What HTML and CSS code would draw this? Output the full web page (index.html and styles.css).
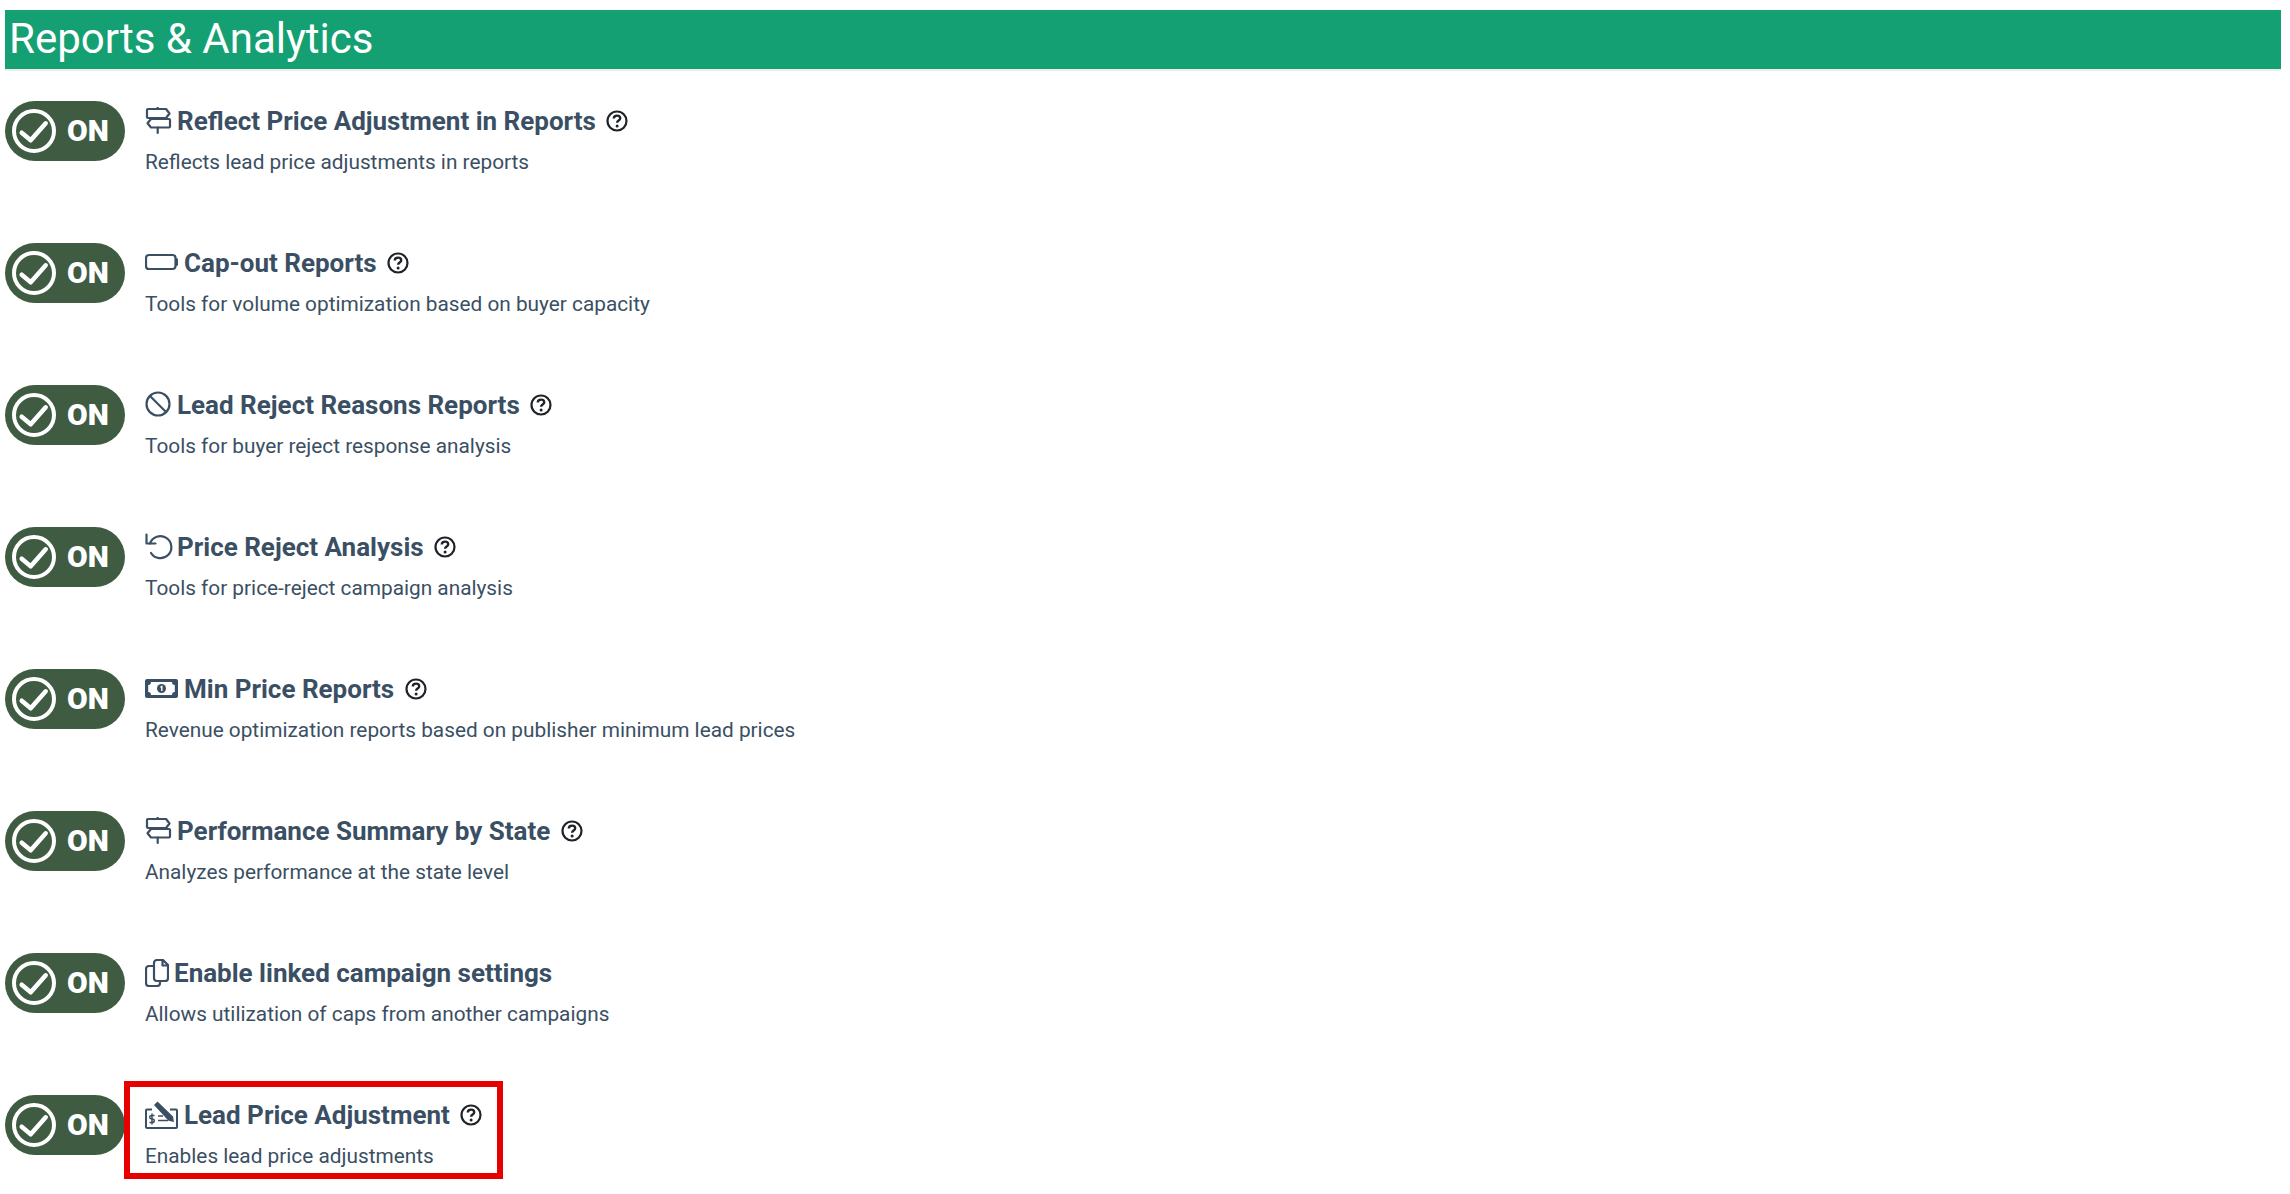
FILE: index.html
```html
<!DOCTYPE html>
<html lang="en">
<head>
    <meta charset="UTF-8">
    <meta name="viewport" content="width=device-width, initial-scale=1.0">
    <title>Reports &amp; Analytics</title>
    <link rel="stylesheet" href="styles.css">
</head>
<body>
    <!-- shared icons -->
    <svg class="sprite" aria-hidden="true">
        <symbol id="i-check" viewBox="0 0 44 44">
            <circle cx="22" cy="22" r="20" fill="none" stroke="currentColor" stroke-width="4"/>
            <path d="M9.700 23.700l9 7.600 15-17" fill="none" stroke="currentColor" stroke-width="4.500" stroke-linecap="round" stroke-linejoin="round"/>
        </symbol>
        <symbol id="i-help" viewBox="0 0 22 22">
            <circle cx="11" cy="11" r="9.500" fill="none" stroke="currentColor" stroke-width="2.200"/>
            <path d="M7.800 8.600c0-1.900 1.400-3 3.300-3 1.800 0 3.100 1.100 3.100 2.600 0 2.400-3.100 2.300-3.100 4.600" fill="none" stroke="currentColor" stroke-width="2.400"/>
            <circle cx="11.100" cy="15.900" r="1.500" fill="currentColor"/>
        </symbol>
        <symbol id="i-sign" viewBox="0 0 28 28">
            <path d="M12.700 .5v1.500M12.700 20.500v5.500" fill="none" stroke="currentColor" stroke-width="2.200" stroke-linecap="round"/>
            <path d="M3 2h18l3.500 4.500L21 11H3a1 1 0 0 1-1-1V3a1 1 0 0 1 1-1zM24 12H6l-3.500 4.250L6 20.500h18a1 1 0 0 0 1-1V13a1 1 0 0 0-1-1z" fill="none" stroke="currentColor" stroke-width="2.200" stroke-linejoin="round"/>
        </symbol>
    </svg>

    <div class="page">
        <h1 class="section-title">Reports &amp; Analytics</h1>

        <ul class="feature-list">
            <li class="feature">
                <span class="toggle"><svg class="toggle-check"><use href="#i-check"/></svg>ON</span>
                <div class="feature-text">
                    <h2 class="feature-name">
                        <svg class="icon icon-sign"><use href="#i-sign"/></svg>
                        <span>Reflect Price Adjustment in Reports</span>
                        <svg class="help"><use href="#i-help"/></svg>
                    </h2>
                    <p class="feature-desc">Reflects lead price adjustments in reports</p>
                </div>
            </li>
            <li class="feature">
                <span class="toggle"><svg class="toggle-check"><use href="#i-check"/></svg>ON</span>
                <div class="feature-text">
                    <h2 class="feature-name">
                        <svg class="icon icon-wide" viewBox="0 0 33 28">
                            <rect x="1" y="6" width="29.500" height="14" rx="3" fill="none" stroke="currentColor" stroke-width="2.200"/>
                            <path d="M31.500 10.500v5" stroke="currentColor" stroke-width="3" stroke-linecap="round"/>
                        </svg>
                        <span>Cap-out Reports</span>
                        <svg class="help"><use href="#i-help"/></svg>
                    </h2>
                    <p class="feature-desc">Tools for volume optimization based on buyer capacity</p>
                </div>
            </li>
            <li class="feature">
                <span class="toggle"><svg class="toggle-check"><use href="#i-check"/></svg>ON</span>
                <div class="feature-text">
                    <h2 class="feature-name">
                        <svg class="icon icon-sign" viewBox="0 0 28 28">
                            <circle cx="13" cy="13" r="11.500" fill="none" stroke="currentColor" stroke-width="2.200"/>
                            <path d="M5 5l16 16" stroke="currentColor" stroke-width="2.200"/>
                        </svg>
                        <span>Lead Reject Reasons Reports</span>
                        <svg class="help"><use href="#i-help"/></svg>
                    </h2>
                    <p class="feature-desc">Tools for buyer reject response analysis</p>
                </div>
            </li>
            <li class="feature">
                <span class="toggle"><svg class="toggle-check"><use href="#i-check"/></svg>ON</span>
                <div class="feature-text">
                    <h2 class="feature-name">
                        <svg class="icon icon-sign" viewBox="0 0 28 28">
                            <path d="M5 10.500A11 11 0 1 1 6 20" fill="none" stroke="currentColor" stroke-width="2.200" stroke-linecap="round"/>
                            <path d="M1.500 1.500v9h9" fill="none" stroke="currentColor" stroke-width="2.200" stroke-linecap="round" stroke-linejoin="round"/>
                        </svg>
                        <span>Price Reject Analysis</span>
                        <svg class="help"><use href="#i-help"/></svg>
                    </h2>
                    <p class="feature-desc">Tools for price-reject campaign analysis</p>
                </div>
            </li>
            <li class="feature">
                <span class="toggle"><svg class="toggle-check"><use href="#i-check"/></svg>ON</span>
                <div class="feature-text">
                    <h2 class="feature-name">
                        <svg class="icon icon-wide" viewBox="0 0 33 28">
                            <path fill-rule="evenodd" fill="currentColor" d="M2 4h29a2 2 0 0 1 2 2v15a2 2 0 0 1-2 2H2a2 2 0 0 1-2-2V6a2 2 0 0 1 2-2zM6 7a3 3 0 0 1-2.800 3v7a3 3 0 0 1 2.800 3h21a3 3 0 0 1 2.800-3v-7a3 3 0 0 1-2.800-3z"/>
                            <circle cx="16.500" cy="13.500" r="4.500" fill="currentColor"/>
                            <path d="M15.500 12.300l1.300-.8v4.500" fill="none" stroke="#fff" stroke-width="1.400"/>
                        </svg>
                        <span>Min Price Reports</span>
                        <svg class="help"><use href="#i-help"/></svg>
                    </h2>
                    <p class="feature-desc">Revenue optimization reports based on publisher minimum lead prices</p>
                </div>
            </li>
            <li class="feature">
                <span class="toggle"><svg class="toggle-check"><use href="#i-check"/></svg>ON</span>
                <div class="feature-text">
                    <h2 class="feature-name">
                        <svg class="icon icon-sign"><use href="#i-sign"/></svg>
                        <span>Performance Summary by State</span>
                        <svg class="help"><use href="#i-help"/></svg>
                    </h2>
                    <p class="feature-desc">Analyzes performance at the state level</p>
                </div>
            </li>
            <li class="feature">
                <span class="toggle"><svg class="toggle-check"><use href="#i-check"/></svg>ON</span>
                <div class="feature-text">
                    <h2 class="feature-name">
                        <svg class="icon icon-copy" viewBox="0 0 24 28">
                            <path d="M9 7H4a3 3 0 0 0-3 3v14a3 3 0 0 0 3 3h8a3 3 0 0 0 3-3v-2" fill="none" stroke="currentColor" stroke-width="2.200"/>
                            <path d="M9 4a3 3 0 0 1 3-3h6l5 5v13a3 3 0 0 1-3 3h-8a3 3 0 0 1-3-3zM17.500 1.500v5h5" fill="none" stroke="currentColor" stroke-width="2.200" stroke-linejoin="round"/>
                        </svg>
                        <span>Enable linked campaign settings</span>
                    </h2>
                    <p class="feature-desc">Allows utilization of caps from another campaigns</p>
                </div>
            </li>
            <li class="feature">
                <span class="toggle"><svg class="toggle-check"><use href="#i-check"/></svg>ON</span>
                <div class="feature-text feature-text-marked">
                    <h2 class="feature-name">
                        <svg class="icon icon-wide" viewBox="0 0 33 28">
                            <path d="M7 8.500H2a1 1 0 0 0-1 1v16.500a1 1 0 0 0 1 1h29a1 1 0 0 0 1-1V9.500a1 1 0 0 0-1-1h-6" fill="none" stroke="currentColor" stroke-width="2"/>
                            <path d="M9 4l3.500-3.500 15.500 15 1 5.500-5.500-1.200z" fill="currentColor"/>
                            <path d="M13 15h5M13 19.500h10M9.500 14.500H6.500a1.700 1.700 0 0 0 0 3.500h1a1.700 1.700 0 0 1 0 3.500H4.500M7 12.500v11" fill="none" stroke="currentColor" stroke-width="1.500"/>
                        </svg>
                        <span>Lead Price Adjustment</span>
                        <svg class="help"><use href="#i-help"/></svg>
                    </h2>
                    <p class="feature-desc">Enables lead price adjustments</p>
                </div>
            </li>
        </ul>
    </div>
</body>
</html>
```

FILE: styles.css
```css
* {
    box-sizing: border-box;
}

body {
    margin: 0;
    background-color: #fff;
    font-family: Roboto, "Liberation Sans", sans-serif;
}

.sprite {
    display: none;
}

.page {
    padding: 10px 9px 0 5px;
}

.section-title {
    margin: 0;
    height: 61px;
    padding-left: 4px;
    background-color: #14a073;
    border-bottom: 2px solid #eceeed;
    color: #fff;
    font-size: 42px;
    font-weight: 400;
    line-height: 58px;
}

.feature-list {
    list-style: none;
    margin: 30px 0 0;
    padding: 0;
}

.feature {
    display: flex;
    align-items: flex-start;
    gap: 20px;
    height: 142px;
}

.toggle {
    display: flex;
    align-items: center;
    flex: none;
    width: 120px;
    height: 60px;
    padding-left: 7px;
    padding-bottom: 2px;
    border-radius: 30px;
    background-color: #3f5c43;
    color: #fff;
    font-size: 30px;
    font-weight: 900;
}

.toggle-check {
    width: 44px;
    height: 44px;
    margin: 2px 11px 0 0;
}

.feature-text {
    color: #3a4f63;
}

/* red annotation box round the last row */
.feature-text-marked {
    margin: -14px -21px 0;
    padding: 8px 15px 3px;
    border: 6px solid #e60000;
}

.feature-name {
    display: flex;
    align-items: center;
    height: 39px;
    margin: 0;
    font-size: 26px;
    font-weight: 700;
}

.icon {
    flex: none;
    height: 28px;
    margin-right: 4px;
}

.icon-sign {
    width: 28px;
}

.icon-wide {
    width: 33px;
    margin-right: 6px;
}

.icon-copy {
    width: 24px;
    margin-right: 5px;
}

.help {
    flex: none;
    width: 22px;
    height: 22px;
    margin-left: 10.5px;
    color: #1f2328;
}

.feature-desc {
    margin: 8px 0 0;
    font-size: 20.8px;
    line-height: 28px;
}
```
